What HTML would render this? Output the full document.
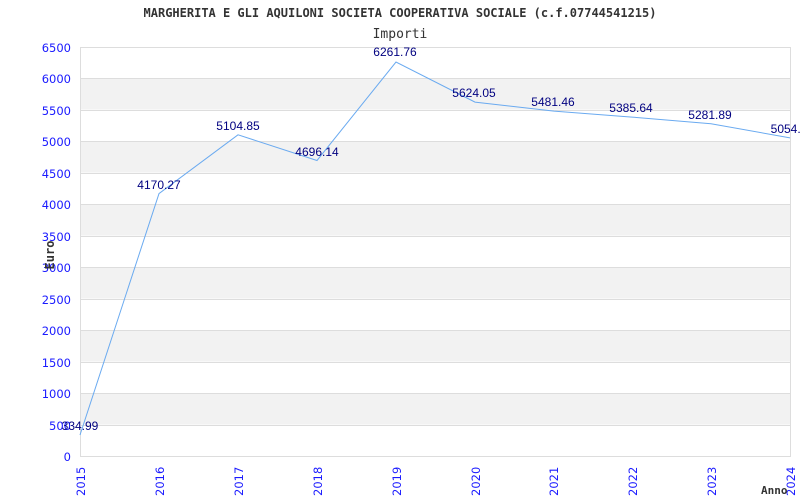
<!DOCTYPE html>
<html><head><meta charset="utf-8"><style>
body{margin:0;background:#fff;}
svg{display:block;}
</style></head><body>
<svg width="800" height="500" xmlns="http://www.w3.org/2000/svg">
<text x="400" y="17" text-anchor="middle" font-family="'DejaVu Sans Mono','Liberation Mono',monospace" font-weight="bold" font-size="12" fill="#333">MARGHERITA E GLI AQUILONI SOCIETA COOPERATIVA SOCIALE (c.f.07744541215)</text>
<text x="400" y="38" text-anchor="middle" font-family="'DejaVu Sans Mono','Liberation Mono',monospace" font-size="13" fill="#333">Importi</text>
<g fill="#f2f2f2">
<rect x="80" y="78.1" width="710" height="31.5"/>
<rect x="80" y="141" width="710" height="31.5"/>
<rect x="80" y="204" width="710" height="31.5"/>
<rect x="80" y="267" width="710" height="31.5"/>
<rect x="80" y="330" width="710" height="31.5"/>
<rect x="80" y="393" width="710" height="31.5"/>
</g>
<g stroke="#ddd" stroke-width="1">
<line x1="80" y1="47.5" x2="790" y2="47.5"/>
<line x1="80" y1="78.5" x2="790" y2="78.5"/>
<line x1="80" y1="110.5" x2="790" y2="110.5"/>
<line x1="80" y1="141.5" x2="790" y2="141.5"/>
<line x1="80" y1="173.5" x2="790" y2="173.5"/>
<line x1="80" y1="204.5" x2="790" y2="204.5"/>
<line x1="80" y1="236.5" x2="790" y2="236.5"/>
<line x1="80" y1="267.5" x2="790" y2="267.5"/>
<line x1="80" y1="299.5" x2="790" y2="299.5"/>
<line x1="80" y1="330.5" x2="790" y2="330.5"/>
<line x1="80" y1="362.5" x2="790" y2="362.5"/>
<line x1="80" y1="393.5" x2="790" y2="393.5"/>
<line x1="80" y1="425.5" x2="790" y2="425.5"/>
<line x1="80" y1="456.5" x2="790" y2="456.5"/>
<line x1="80.5" y1="47" x2="80.5" y2="457"/>
<line x1="790.5" y1="47" x2="790.5" y2="457"/>
</g>
<g font-family="'DejaVu Sans',sans-serif" font-size="11.5" fill="#1a1aff" text-anchor="end">
<text x="71" y="52">6500</text><text x="71" y="83">6000</text><text x="71" y="115">5500</text>
<text x="71" y="146">5000</text><text x="71" y="178">4500</text><text x="71" y="209">4000</text>
<text x="71" y="241">3500</text><text x="71" y="272">3000</text><text x="71" y="304">2500</text>
<text x="71" y="335">2000</text><text x="71" y="367">1500</text><text x="71" y="398">1000</text>
<text x="71" y="430">500</text><text x="71" y="461">0</text>
</g>
<g font-family="'DejaVu Sans',sans-serif" font-size="11.5" fill="#1a1aff">
<text transform="translate(85,496) rotate(-90)">2015</text>
<text transform="translate(164,496) rotate(-90)">2016</text>
<text transform="translate(243,496) rotate(-90)">2017</text>
<text transform="translate(322,496) rotate(-90)">2018</text>
<text transform="translate(401,496) rotate(-90)">2019</text>
<text transform="translate(480,496) rotate(-90)">2020</text>
<text transform="translate(558,496) rotate(-90)">2021</text>
<text transform="translate(637,496) rotate(-90)">2022</text>
<text transform="translate(716,496) rotate(-90)">2023</text>
<text transform="translate(795,496) rotate(-90)">2024</text>
</g>
<text transform="translate(54,255) rotate(-90)" text-anchor="middle" font-family="'DejaVu Sans Mono',monospace" font-weight="bold" font-size="12" fill="#333">Euro</text>
<text x="761" y="494" font-family="'DejaVu Sans Mono',monospace" font-weight="bold" font-size="11" fill="#333">Anno</text>
<polyline fill="none" stroke="#6aaaf0" stroke-width="1" points="80,435 159,193.6 238,134.8 317,160.5 396,62 475,102.1 554,111.1 632,117.1 711,123.7 790,137.9"/>
<g font-family="'Liberation Sans',sans-serif" font-size="12" fill="#000080" text-anchor="middle">
<text x="80" y="430">334.99</text>
<text x="159" y="189">4170.27</text>
<text x="238" y="130">5104.85</text>
<text x="317" y="156">4696.14</text>
<text x="395" y="56">6261.76</text>
<text x="474" y="97">5624.05</text>
<text x="553" y="106">5481.46</text>
<text x="631" y="112">5385.64</text>
<text x="710" y="119">5281.89</text>
<text x="789" y="133">5054.9</text>
</g>
</svg>
</body></html>
